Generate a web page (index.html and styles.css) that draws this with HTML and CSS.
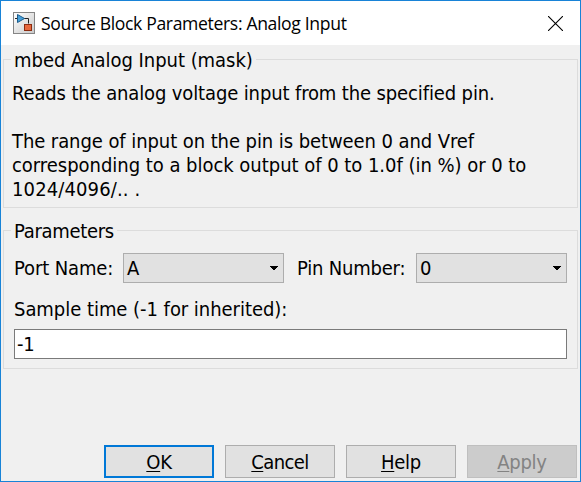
FILE: index.html
```html
<!DOCTYPE html>
<html lang="en">
<head>
<meta charset="utf-8">
<title>Source Block Parameters: Analog Input</title>
<link rel="stylesheet" href="styles.css">
</head>
<body>
<main class="window">
  <header class="titlebar">
    <svg class="app-icon" width="22" height="22" viewBox="0 0 22 22">
      <defs><linearGradient id="tile" x1="0" y1="0" x2="1" y2="1"><stop offset="0" stop-color="#fff"/><stop offset="1" stop-color="#c9c9c9"/></linearGradient></defs>
      <rect x=".5" y=".5" width="21" height="21" fill="url(#tile)" stroke="#858585"/>
      <path d="M2 6.500h3M11 6.500h4.500v5" fill="none" stroke="#222"/>
      <path d="M4.500 2.500v8l7-4z" fill="#48a0d8" stroke="#1c5c8c"/>
      <rect x="11.500" y="12.500" width="7" height="6" fill="#e8683c" stroke="#8c2c10"/>
    </svg>
    <h1 class="title">Source Block Parameters: Analog Input</h1>
    <svg class="close" width="15" height="15" viewBox="0 0 15 15"><path d="M0 0l15 15M15 0L0 15" stroke="#000" stroke-width="1.100"/></svg>
  </header>
  <section class="group about">
    <h2 class="legend t-mask">mbed Analog Input (mask)</h2>
    <p class="description"><span class="t-reads">Reads the analog voltage input from the specified pin.</span><br><br><span class="t-range">The range of input on the pin is between 0 and Vref</span><br><span class="t-corr">corresponding to a block output of 0 to 1.0f (in %) or 0 to</span><br><span class="t-nums">1024/4096/.. .</span></p>
  </section>
  <section class="group params">
    <h2 class="legend">Parameters</h2>
    <div class="row">
      <span class="label port">Port Name:</span>
      <div class="select select-port">A<svg width="8" height="4" viewBox="0 0 8 4" shape-rendering="crispEdges"><path d="M0 0h8v1h-1v1h-1v1h-1v1h-2v-1h-1v-1h-1v-1h-1z"/></svg></div>
      <span class="label pin">Pin Number:</span>
      <div class="select select-pin">0<svg width="8" height="4" viewBox="0 0 8 4" shape-rendering="crispEdges"><path d="M0 0h8v1h-1v1h-1v1h-1v1h-2v-1h-1v-1h-1v-1h-1z"/></svg></div>
    </div>
    <div class="label sample">Sample time (-1 for inherited):</div>
    <div class="field">-1</div>
  </section>
  <footer class="buttons">
    <div class="button default"><span><u>O</u>K</span></div>
    <div class="button cancel"><span><u>C</u>ancel</span></div>
    <div class="button"><span><u>H</u>elp</span></div>
    <div class="button disabled"><span><u>A</u>pply</span></div>
  </footer>
</main>
</body>
</html>
```
FILE: styles.css
```css
* { box-sizing: border-box; }
body { margin: 0; }
.window {
  width: 581px;
  height: 482px;
  border: 1px solid #1883d7;
  background: #f0f0f0;
  display: flex;
  flex-direction: column;
  font: 20px/24px "DejaVu Sans Condensed", "DejaVu Sans", sans-serif;
  font-stretch: condensed;
  letter-spacing: -0.3px;
  color: #000;
  white-space: nowrap;
}
.titlebar {
  height: 44px;
  background: #fff;
  display: flex;
  align-items: center;
  padding: 0 17px 0 12px;
}
.app-icon { margin-right: 6px; }
.title {
  margin: 0;
  font: 400 17.6px/24px "Open Sans", "Noto Sans", sans-serif;
  letter-spacing: -0.35px;
}
.close { margin-left: auto; }
.group {
  margin: 0 2px;
  border: 1px solid #dcdcdc;
}
.about { margin-top: 14px; height: 149px; padding-left: 8px; }
.params { margin-top: 22px; height: 139px; padding: 0 10px; }
.legend {
  width: max-content;
  margin: -12px 0 0 -1px;
  padding: 0 3px;
  background: #f0f0f0;
  font: inherit;
}
.params .legend { margin-left: -3px; }
.description { margin: 9px 0 0; }
.t-mask { letter-spacing: -0.04px; }
.t-reads { letter-spacing: -0.13px; }
.t-range { letter-spacing: -0.08px; }
.t-corr { letter-spacing: -0.03px; }
.t-nums { letter-spacing: 0.12px; }
.row { display: flex; align-items: center; height: 30px; margin-top: 10px; }
.label.port { width: 109px; letter-spacing: -0.12px; }
.label.pin { width: 132px; padding-left: 13px; letter-spacing: -0.2px; }
.select {
  height: 30px;
  border: 1px solid #adadad;
  background: #e1e1e1;
  display: flex;
  align-items: center;
  justify-content: space-between;
  padding: 0 5px 0 3px;
}
.select-port { width: 161px; }
.select-pin { width: 151px; }
.sample { margin-top: 14px; letter-spacing: -0.04px; }
.field {
  height: 30px;
  margin-top: 8px;
  padding: 2px;
  border: 1px solid #7a7a7a;
  background: #fff;
}
.buttons {
  display: flex;
  gap: 11px;
  margin: 76px 0 0 103px;
}
.button {
  width: 110px;
  height: 33px;
  border: 1px solid #adadad;
  background: #e1e1e1;
  display: flex;
  align-items: center;
  justify-content: center;
}
.button u { text-decoration: underline; text-decoration-thickness: 1px; text-underline-offset: 2px; text-decoration-skip-ink: none; }
.cancel { letter-spacing: -0.6px; }
.default { border: 2px solid #0078d7; }
.disabled { background: #ccc; border-color: #bfbfbf; color: #838383; }
```
